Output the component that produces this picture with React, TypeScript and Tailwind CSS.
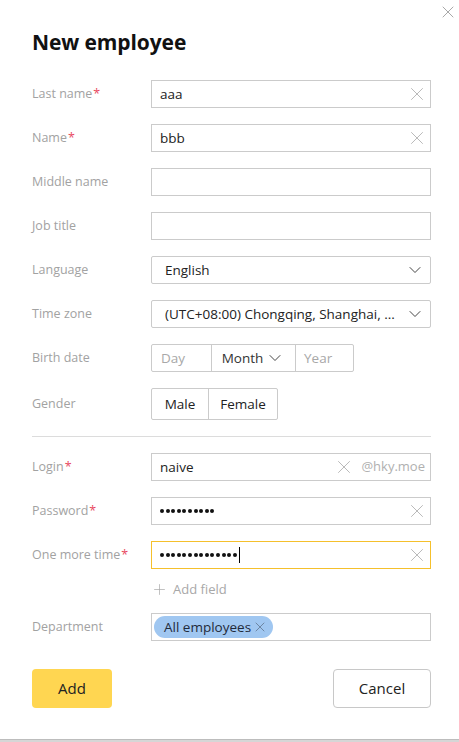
import { ChevronDown, Plus, X } from "lucide-react";

const font = { fontFamily: '"Open Sans", "Noto Sans", sans-serif' };

const Label = ({ text, required }: { text: string; required?: boolean }) => (
    <div className="w-[119px] shrink-0 text-[12.5px] text-[#a2a2a2]">
        {text}
        {required && <span className="text-[#e8485f] ml-[1px]">*</span>}
    </div>
);

const Row = ({ children, className = "" }: { children: React.ReactNode; className?: string }) => (
    <div className={`flex items-center ${className}`}>{children}</div>
);

const ClearIcon = () => <X className="size-[22px] text-[#ababab] -mr-[3px]" strokeWidth={0.9} />;

const TextInput = ({ value, clear, focused, suffix }: { value?: React.ReactNode; clear?: boolean; focused?: boolean; suffix?: string }) => (
    <div
        className={`flex-1 h-[28px] flex items-center border ${focused ? "border-[#f5c02c]" : "border-[#cbcbcb]"} pl-[8px] pr-[5px]`}
    >
        <div className="flex-1 text-[13.5px] text-[#222] flex items-center">{value}</div>
        {clear && <ClearIcon />}
        {suffix && <span className="ml-[9px] text-[13px] text-[#b0b0b0]">{suffix}</span>}
    </div>
);

const Dots = ({ n, caret }: { n: number; caret?: boolean }) => (
    <span className="flex items-center gap-[1.6px]">
        {Array.from({ length: n }).map((_, i) => (
            <span key={i} className="size-[4px] rounded-full bg-[#111]" />
        ))}
        {caret && <span className="w-[1px] h-[16px] bg-black ml-[1px]" />}
    </span>
);

const Select = ({ value }: { value: string }) => (
    <div className="flex-1 h-[28px] flex items-center border border-[#cbcbcb] rounded-[2px] pl-[13px] pr-[5px]">
        <div className="flex-1 text-[13.5px] text-[#222] truncate">{value}</div>
        <ChevronDown className="size-[20px] text-[#333]" strokeWidth={1.1} />
    </div>
);

export default function App() {
    return (
        <div style={font} className="w-[459px] h-[742px] bg-white relative flex flex-col">
            <button className="absolute right-[1px] top-[2px] text-[#8a8a8a]">
                <X className="size-[20px]" strokeWidth={0.9} />
            </button>
            <div className="pl-[32px] pr-[28px] flex-1 flex flex-col">
                <h1 className="mt-[28px] text-[21px] font-bold text-[#111] leading-[28px] tracking-[-0.1px]">New employee</h1>

                <Row className="mt-[24px]">
                    <Label text="Last name" required />
                    <TextInput value="aaa" clear />
                </Row>
                <Row className="mt-[16px]">
                    <Label text="Name" required />
                    <TextInput value="bbb" clear />
                </Row>
                <Row className="mt-[16px]">
                    <Label text="Middle name" />
                    <TextInput />
                </Row>
                <Row className="mt-[16px]">
                    <Label text="Job title" />
                    <TextInput />
                </Row>
                <Row className="mt-[16px]">
                    <Label text="Language" />
                    <Select value="English" />
                </Row>
                <Row className="mt-[16px]">
                    <Label text="Time zone" />
                    <Select value="(UTC+08:00) Chongqing, Shanghai, ..." />
                </Row>
                <Row className="mt-[16px]">
                    <Label text="Birth date" />
                    <div className="flex h-[28px] border border-[#cbcbcb] rounded-[2px] text-[13.5px]">
                        <div className="w-[59px] flex items-center pl-[9px] text-[#a8a8a8]">Day</div>
                        <div className="w-[84px] flex items-center justify-center gap-[2px] border-l border-[#cbcbcb] text-[#333]">
                            Month <ChevronDown className="size-[20px]" strokeWidth={1.1} />
                        </div>
                        <div className="w-[58px] flex items-center pl-[8px] border-l border-[#cbcbcb] text-[#a8a8a8]">Year</div>
                    </div>
                </Row>
                <Row className="mt-[16px]">
                    <Label text="Gender" />
                    <div className="flex h-[32px] border border-[#cbcbcb] rounded-[2px] text-[13.5px] text-[#222]">
                        <div className="w-[56px] flex items-center justify-center">Male</div>
                        <div className="w-[69px] flex items-center justify-center border-l border-[#cbcbcb]">Female</div>
                    </div>
                </Row>

                <div className="mt-[16px] border-t border-[#dcdcdc]" />

                <Row className="mt-[16px]">
                    <Label text="Login" required />
                    <TextInput value="naive" clear suffix="@hky.moe" />
                </Row>
                <Row className="mt-[16px]">
                    <Label text="Password" required />
                    <TextInput value={<Dots n={10} />} clear />
                </Row>
                <Row className="mt-[16px]">
                    <Label text="One more time" required />
                    <TextInput value={<Dots n={14} caret />} clear focused />
                </Row>
                <Row className="mt-[11px] h-[19px]">
                    <div className="w-[119px]" />
                    <div className="flex items-center gap-[5px] text-[13px] text-[#a8a8a8]">
                        <Plus className="size-[17px]" strokeWidth={1} />
                        Add field
                    </div>
                </Row>
                <Row className="mt-[14px]">
                    <Label text="Department" />
                    <div className="flex-1 h-[28px] flex items-center border border-[#cbcbcb] pl-[2px]">
                        <span className="h-[22px] flex items-center gap-[1px] rounded-full bg-[#a0c7f1] pl-[10px] pr-[5px] text-[13.5px] text-[#1f2a3a]">
                            All employees <X className="size-[16px] text-[#5b6d86]" strokeWidth={1.1} />
                        </span>
                    </div>
                </Row>

                <div className="mt-[28px] flex justify-between">
                    <button className="w-[80px] h-[39px] rounded-[4px] bg-[#ffd651] text-[15px] text-[#222]">Add</button>
                    <button className="w-[98px] h-[39px] rounded-[4px] border border-[#c8c8c8] bg-white text-[15px] text-[#222]">Cancel</button>
                </div>
            </div>
            <div className="h-[3px] bg-[#d6d6d6] border-t border-[#bdbdbd]" />
        </div>
    );
}
